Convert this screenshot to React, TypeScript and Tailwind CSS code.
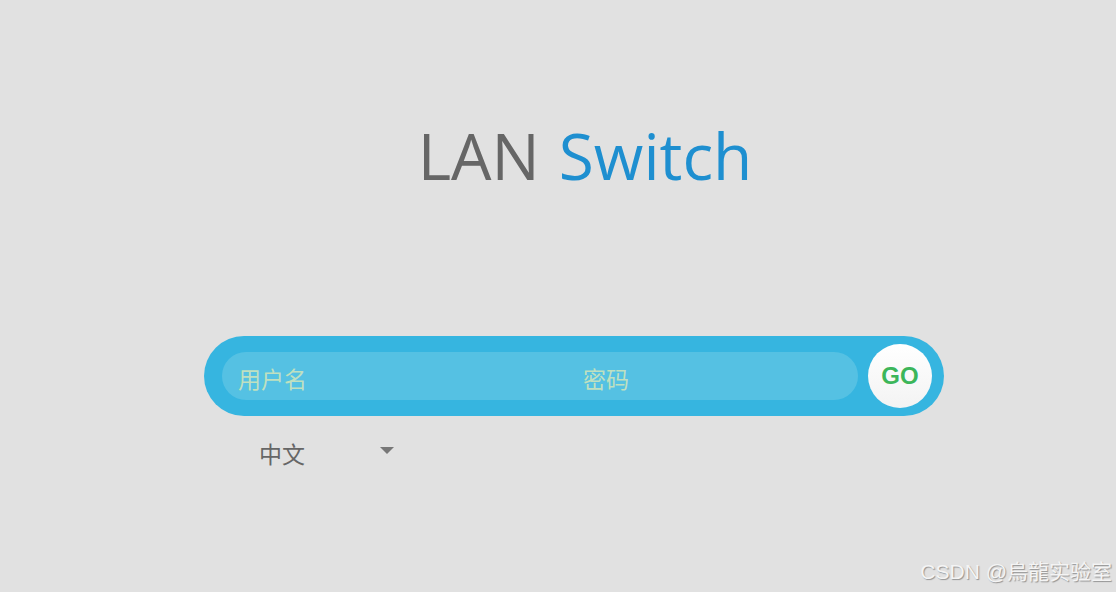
export default function App() {
  return (
    <div className="relative w-[1116px] h-[592px] overflow-hidden bg-[#e1e1e1] font-['Open_Sans','Noto_Sans_CJK_SC',sans-serif]">
      <div className="flex flex-col items-center">
        <h1 className="mt-[113px] ml-[54px] text-[64px] leading-[86px] font-['Open_Sans','Noto_Sans',sans-serif]">
          <span className="text-[#666666]">LAN</span>
          <span className="ml-[19px] text-[#1e8fd0]">Switch</span>
        </h1>
      </div>

      <div className="ml-[204px] mt-[137px] w-[740px]">
        <div className="flex h-[80px] items-center rounded-full bg-[#36b5e0] pl-[18px] pr-[12px]">
          <div className="flex h-[48px] w-[636px] items-center rounded-full bg-[#55c1e3] pt-[4px] text-[23px] text-[#bfe0c0] font-['Noto_Sans_CJK_SC',sans-serif]">
            <span className="ml-[16px] w-[345px]">用户名</span>
            <span>密码</span>
          </div>
          <button className="ml-[10px] flex h-[64px] w-[64px] items-center justify-center rounded-full bg-gradient-to-b from-white to-[#f3f3f3] text-[24px] font-bold text-[#3cb65a] font-['Liberation_Sans',sans-serif]">
            GO
          </button>
        </div>

        <div className="mt-[20px] flex items-center pl-[55px]">
          <span className="w-[121px] text-[23px] text-[#666666] font-['Noto_Sans_CJK_SC',sans-serif]">中文</span>
          <span className="mb-[6px] h-0 w-0 border-x-[7px] border-t-[7px] border-x-transparent border-t-[#777777]" />
        </div>
      </div>

      <div className="absolute right-[4px] bottom-[8px] text-[21px] leading-[24px] text-[#f4f4f4] [text-shadow:1px_1px_1px_rgba(0,0,0,0.35)] font-['Liberation_Sans','Noto_Sans_CJK_SC',sans-serif]">
        CSDN @烏龍实验室
      </div>
    </div>
  );
}
